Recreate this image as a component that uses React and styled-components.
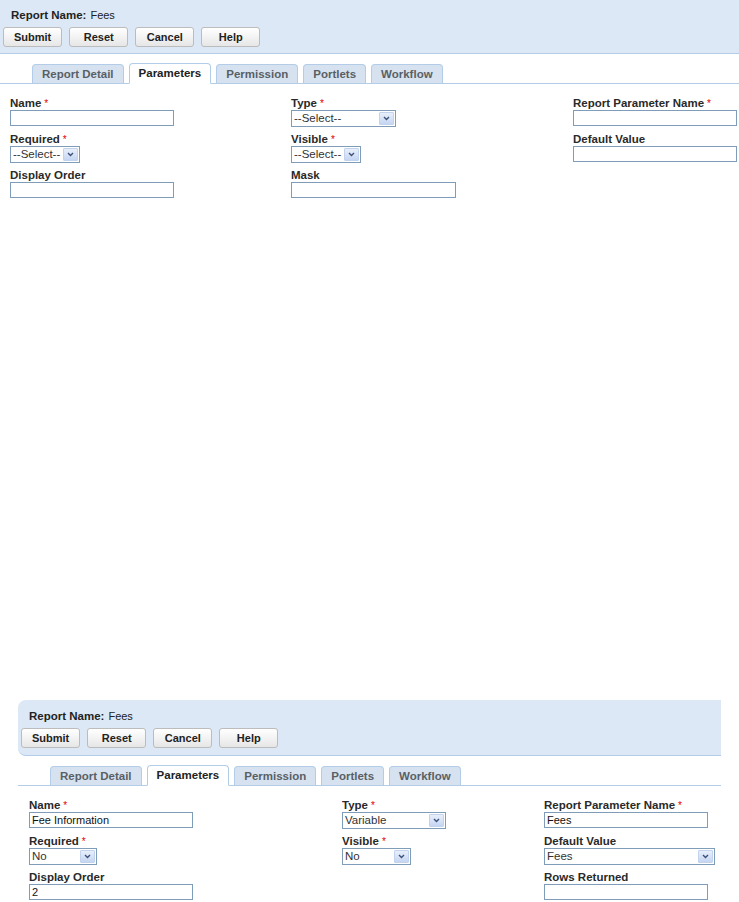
import React from 'react';
import styled, { createGlobalStyle } from 'styled-components';

const GlobalStyle = createGlobalStyle`
  html, body {
    margin: 0;
    padding: 0;
    background: #ffffff;
  }
  body {
    font-family: "Liberation Sans", Arial, sans-serif;
    font-size: 11px;
    color: #222222;
  }
`;

const Page = styled.div`
  display: flex;
  flex-direction: column;
  width: 739px;
`;

const Shot = styled.section`
  box-sizing: border-box;
  width: ${(p) => p.$width}px;
  height: ${(p) => (p.$height ? `${p.$height}px` : 'auto')};
  margin-left: ${(p) => p.$inset}px;
`;

const Header = styled.div`
  background: #dce8f5;
  border-bottom: 1px solid #b3cde8;
  border-radius: ${(p) => (p.$rounded ? '8px 0 0 8px' : '0')};
  padding: ${(p) => (p.$rounded ? '8px 3px 7px' : '7px 3px 6px')};
`;

const Title = styled.div`
  display: flex;
  gap: 4px;
  height: 16px;
  line-height: 16px;
  padding-left: 8px;
  font-size: 11.5px;
  font-weight: bold;
  color: #222;
`;

const TitleValue = styled.span`
  font-size: 11px;
  font-weight: normal;
`;

const Buttons = styled.div`
  display: flex;
  gap: 7px;
  margin-top: 4px;
`;

const Button = styled.button`
  box-sizing: border-box;
  min-width: 59px;
  height: 20px;
  padding: 0 10px;
  border: 1px solid #bcbcbc;
  border-radius: 3px;
  background: linear-gradient(#ffffff, #f3f3f3 50%, #e6e6e6);
  font-family: "Liberation Sans", Arial, sans-serif;
  font-size: 11px;
  font-weight: bold;
  color: #222;
  cursor: pointer;
`;

const TabBar = styled.div`
  display: flex;
  align-items: flex-end;
  gap: 5px;
  height: 20px;
  margin-top: 9px;
  padding-left: 32px;
  border-bottom: 1px solid #b3cde8;
`;

const Tab = styled.div`
  box-sizing: border-box;
  height: ${(p) => (p.$active ? '21px' : '19px')};
  margin-bottom: ${(p) => (p.$active ? '-1px' : '0')};
  padding: 0 9px;
  border: 1px solid #b3cde8;
  border-bottom: ${(p) => (p.$active ? '1px solid #ffffff' : 'none')};
  border-radius: 4px 4px 0 0;
  background: ${(p) => (p.$active ? '#ffffff' : '#d6e2ef')};
  line-height: ${(p) => (p.$active ? '19px' : '18px')};
  font-size: 11.5px;
  font-weight: bold;
  color: ${(p) => (p.$active ? '#222' : '#5a5f66')};
`;

const Form = styled.div`
  display: grid;
  grid-template-columns: ${(p) => p.$columns};
  row-gap: 5px;
  padding: 12px 0 0 ${(p) => p.$left}px;
`;

const Field = styled.div`
  display: flex;
  flex-direction: column;
  align-items: flex-start;
`;

const Label = styled.label`
  height: 14px;
  line-height: 14px;
  font-size: 11.5px;
  font-weight: bold;
  color: #2a2a2a;
  white-space: nowrap;
`;

const Required = styled.span`
  margin-left: 3px;
  font-weight: normal;
  font-size: 10px;
  color: #e00000;
`;

const TextBox = styled.input`
  box-sizing: border-box;
  width: ${(p) => p.$width}px;
  height: 16px;
  margin: 0;
  padding: 0 2px;
  border: 1px solid #7f9db9;
  background: #fff;
  font-family: "Liberation Sans", Arial, sans-serif;
  font-size: 11px;
  color: #111;
  outline: none;
`;

const SelectBox = styled.div`
  box-sizing: border-box;
  display: flex;
  align-items: stretch;
  width: ${(p) => p.$width}px;
  height: 17px;
  border: 1px solid #7f9db9;
  background: #fff;
`;

const SelectText = styled.span`
  flex: 1;
  padding-left: 2px;
  line-height: 15px;
  font-size: 11.5px;
  color: #333;
  white-space: nowrap;
  overflow: hidden;
`;

const ArrowBox = styled.span`
  box-sizing: border-box;
  display: flex;
  align-items: center;
  justify-content: center;
  width: 15px;
  margin: 1px;
  border: 1px solid #c2d3ee;
  border-radius: 1px;
  background: linear-gradient(#e8effa, #c5d6f2);
`;

const Chevron = () => (
  <svg width="7" height="5" viewBox="0 0 7 5">
    <path d="M1 1 L3.5 3.5 L6 1" fill="none" stroke="#3c5078" strokeWidth="1.4" />
  </svg>
);

const Select = ({ width, value }) => (
  <SelectBox $width={width} role="combobox">
    <SelectText>{value}</SelectText>
    <ArrowBox>
      <Chevron />
    </ArrowBox>
  </SelectBox>
);

const tabs = ['Report Detail', 'Parameters', 'Permission', 'Portlets', 'Workflow'];

const FormCell = ({ field }) => {
  if (!field) return <div />;
  return (
    <Field>
      <Label>
        {field.label}
        {field.required && <Required>*</Required>}
      </Label>
      {field.kind === 'select' ? (
        <Select width={field.width} value={field.value} />
      ) : (
        <TextBox $width={field.width} defaultValue={field.value || ''} />
      )}
    </Field>
  );
};

const ReportScreen = ({ rounded, columns, left, fields }) => (
  <>
    <Header $rounded={rounded}>
      <Title>
        Report Name:
        <TitleValue>Fees</TitleValue>
      </Title>
      <Buttons>
        <Button>Submit</Button>
        <Button>Reset</Button>
        <Button>Cancel</Button>
        <Button>Help</Button>
      </Buttons>
    </Header>
    <TabBar>
      {tabs.map((t) => (
        <Tab key={t} $active={t === 'Parameters'}>
          {t}
        </Tab>
      ))}
    </TabBar>
    <Form $columns={columns} $left={left}>
      {fields.map((f, i) => (
        <FormCell key={i} field={f} />
      ))}
    </Form>
  </>
);

const emptyFields = [
  { label: 'Name', required: true, kind: 'input', width: 164 },
  { label: 'Type', required: true, kind: 'select', width: 105, value: '--Select--' },
  { label: 'Report Parameter Name', required: true, kind: 'input', width: 164 },
  { label: 'Required', required: true, kind: 'select', width: 70, value: '--Select--' },
  { label: 'Visible', required: true, kind: 'select', width: 70, value: '--Select--' },
  { label: 'Default Value', kind: 'input', width: 164 },
  { label: 'Display Order', kind: 'input', width: 164 },
  { label: 'Mask', kind: 'input', width: 165 },
  null,
];

const filledFields = [
  { label: 'Name', required: true, kind: 'input', width: 164, value: 'Fee Information' },
  { label: 'Type', required: true, kind: 'select', width: 104, value: 'Variable' },
  { label: 'Report Parameter Name', required: true, kind: 'input', width: 164, value: 'Fees' },
  { label: 'Required', required: true, kind: 'select', width: 68, value: 'No' },
  { label: 'Visible', required: true, kind: 'select', width: 69, value: 'No' },
  { label: 'Default Value', kind: 'select', width: 171, value: 'Fees' },
  { label: 'Display Order', kind: 'input', width: 164, value: '2' },
  null,
  { label: 'Rows Returned', kind: 'input', width: 164 },
];

export default function App() {
  return (
    <>
      <GlobalStyle />
      <Page>
        <Shot $width={739} $height={700} $inset={0}>
          <ReportScreen columns="281px 282px 1fr" left={10} fields={emptyFields} />
        </Shot>
        <Shot $width={703} $inset={18}>
          <ReportScreen rounded columns="313px 202px 1fr" left={11} fields={filledFields} />
        </Shot>
      </Page>
    </>
  );
}
